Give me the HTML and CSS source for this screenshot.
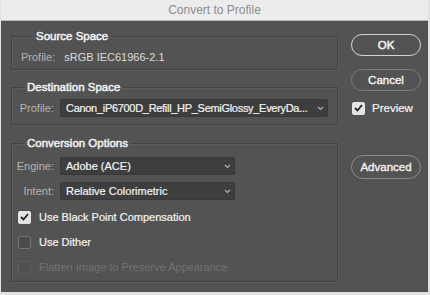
FILE: index.html
```html
<!DOCTYPE html>
<html>
<head>
<meta charset="utf-8">
<link rel="stylesheet" href="styles.css">
</head>
<body>
<div class="window">
  <div class="titlebar">Convert to Profile</div>
  <div class="dialog">
    <div class="main">
      <fieldset class="group g-source">
        <legend>Source Space</legend>
        <div class="row">
          <span class="label">Profile:</span>
          <span class="value">sRGB IEC61966-2.1</span>
        </div>
      </fieldset>
      <fieldset class="group g-dest">
        <legend>Destination Space</legend>
        <div class="form">
          <span class="label">Profile:</span>
          <div class="select wide"><span class="sel-text">Canon_iP6700D_Refill_HP_SemiGlossy_EveryDa...</span><svg class="chev" width="7" height="5" viewBox="0 0 7 5"><path d="M1 1l2.5 2.5L6 1" fill="none" stroke="#b0b0b0" stroke-width="1.2"/></svg></div>
        </div>
      </fieldset>
      <fieldset class="group g-conv">
        <legend>Conversion Options</legend>
        <div class="form">
          <span class="label">Engine:</span>
          <div class="select short"><span class="sel-text">Adobe (ACE)</span><svg class="chev" width="7" height="5" viewBox="0 0 7 5"><path d="M1 1l2.5 2.5L6 1" fill="none" stroke="#b0b0b0" stroke-width="1.2"/></svg></div>
          <span class="label">Intent:</span>
          <div class="select short"><span class="sel-text">Relative Colorimetric</span><svg class="chev" width="7" height="5" viewBox="0 0 7 5"><path d="M1 1l2.5 2.5L6 1" fill="none" stroke="#b0b0b0" stroke-width="1.2"/></svg></div>
        </div>
        <div class="checks">
          <label class="check"><span class="box on"><svg width="9" height="8" viewBox="0 0 9 8"><path d="M1 4l2.5 2.5L8 1" fill="none" stroke="#222" stroke-width="1.8"/></svg></span>Use Black Point Compensation</label>
          <label class="check"><span class="box"></span>Use Dither</label>
          <label class="check disabled"><span class="box"></span>Flatten Image to Preserve Appearance</label>
        </div>
      </fieldset>
    </div>
    <div class="side">
      <button class="btn ok">OK</button>
      <button class="btn cancel">Cancel</button>
      <label class="check preview"><span class="box on"><svg width="9" height="8" viewBox="0 0 9 8"><path d="M1 4l2.5 2.5L8 1" fill="none" stroke="#222" stroke-width="1.8"/></svg></span>Preview</label>
      <button class="btn advanced">Advanced</button>
    </div>
  </div>
</div>
</body>
</html>
```

FILE: styles.css
```css
html, body {
  margin: 0;
  padding: 0;
  background: #e2e2e2;
}
body {
  font-family: "Liberation Sans", Arial, sans-serif;
  font-size: 11px;
}
.window {
  width: 427px;
  margin-left: 1px;
}
.titlebar {
  height: 20px;
  line-height: 21px;
  background: #ececec;
  border-bottom: 1px solid #b8b8b8;
  color: #8c8c8c;
  font-size: 12px;
  text-align: center;
}
.dialog {
  background: #535353;
  height: 271px;
  display: flex;
  padding: 0 7px 0 10px;
  box-sizing: border-box;
}
.main {
  width: 327px;
  display: flex;
  flex-direction: column;
}
.group {
  margin: 0;
  padding: 0;
  border: 1px solid #424242;
  box-shadow: inset 1px 1px 0 #5c5c5c, 1px 1px 0 #5c5c5c;
  min-width: 0;
}
.group legend {
  margin-left: 12px;
  padding: 0 3px;
  line-height: 14px;
  font-size: 11.5px;
  color: #f4f4f4;
  -webkit-text-stroke: 0.45px #f4f4f4;
}
.g-source {
  margin-top: 8px;
  padding: 7px 0 5px 9px;
}
.g-dest {
  margin-top: 10px;
  padding: 5px 9px 7px 0;
}
.g-conv {
  margin-top: 11px;
  padding: 7px 9px 6px 0;
}
.row {
  display: flex;
  line-height: 14px;
}
.label {
  color: #b4b4b4;
}
.row .label {
  margin-right: 9px;
}
.value {
  color: #dcdcdc;
}
.form {
  display: grid;
  grid-template-columns: 42px auto;
  column-gap: 6px;
  row-gap: 7px;
  align-items: center;
  justify-items: start;
}
.form .label {
  justify-self: end;
}
.select {
  height: 18px;
  box-sizing: border-box;
  background: #3e3e3e;
  border: 1px solid #383838;
  border-radius: 2px;
  display: flex;
  align-items: center;
  justify-content: space-between;
  padding: 0 3px 0 5px;
  color: #f4f4f4;
}
.sel-text {
  white-space: nowrap;
  -webkit-text-stroke: 0.2px #f4f4f4;
}
.select.wide {
  width: 268px;
}
.select.wide .sel-text {
  letter-spacing: -0.3px;
}
.select.short {
  width: 175px;
}
.chev {
  flex: none;
  margin-left: 4px;
}
.checks {
  display: flex;
  flex-direction: column;
  gap: 9px;
  margin-top: 9px;
  padding-left: 6px;
}
.check {
  display: flex;
  align-items: center;
  height: 16px;
  color: #f4f4f4;
  -webkit-text-stroke: 0.2px #f4f4f4;
}
.box {
  width: 13px;
  height: 13px;
  box-sizing: border-box;
  border-radius: 2px;
  border: 1px solid #767676;
  background: #4a4a4a;
  margin-right: 8px;
  display: flex;
  align-items: center;
  justify-content: center;
  -webkit-text-stroke: 0;
}
.box.on {
  background: #e4e4e4;
  border-color: #e4e4e4;
}
.check.disabled {
  color: #727272;
  -webkit-text-stroke: 0;
}
.check.disabled .box {
  border-color: #5e5e5e;
  background: #505050;
}
.side {
  margin-left: 13px;
  width: 70px;
  display: flex;
  flex-direction: column;
  padding-top: 13px;
}
.btn {
  font-family: inherit;
  font-size: 11.5px;
  height: 22px;
  border-radius: 11px;
  background: transparent;
  color: #f4f4f4;
  padding: 0;
  width: 70px;
  box-sizing: border-box;
  -webkit-text-stroke: 0.35px #f4f4f4;
}
.ok {
  border: 1.5px solid #d4d4d4;
  -webkit-text-stroke: 0.5px #f4f4f4;
}
.cancel {
  margin-top: 13px;
  border: 1.5px solid #7a7a7a;
}
.preview {
  margin-top: 9px;
  padding-left: 1px;
  font-size: 11.5px;
}
.preview .box {
  margin-right: 7px;
}
.advanced {
  margin-top: 39px;
  height: 24px;
  border-radius: 12px;
  border: 1.5px solid #8a8a8a;
}
```
